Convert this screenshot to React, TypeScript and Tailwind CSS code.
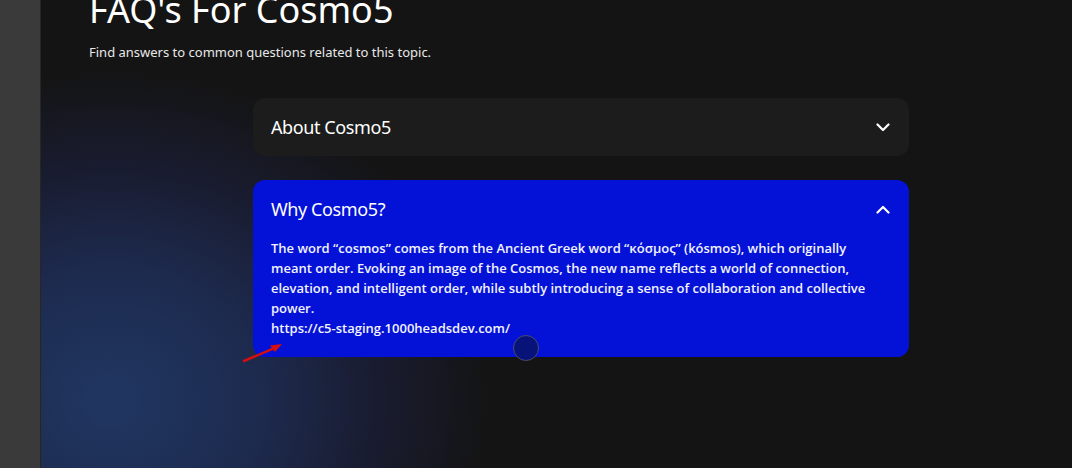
import React from "react";

function Chevron({ up }: { up?: boolean }) {
  return (
    <svg width="14" height="9" viewBox="0 0 14 9" fill="none" className="block">
      {up ? (
        <path d="M1.5 7.5L7 2L12.5 7.5" stroke="white" strokeWidth="2.2" strokeLinecap="round" strokeLinejoin="round" />
      ) : (
        <path d="M1.5 1.5L7 7L12.5 1.5" stroke="white" strokeWidth="2.2" strokeLinecap="round" strokeLinejoin="round" />
      )}
    </svg>
  );
}

export default function App() {
  return (
    <div className="relative flex h-[468px] w-[1072px] overflow-hidden bg-[#141414] font-['Noto_Sans',sans-serif] text-white">
      <div className="w-[40px] shrink-0 bg-[#3a3a3a]" />
      <div className="w-px shrink-0 bg-[#262626]" />
      <div className="relative flex-1 bg-[radial-gradient(ellipse_380px_330px_at_70px_400px,#203762_0%,#1d2a4e_40%,#191c30_70%,rgba(20,20,20,0)_100%)]">
        <div className="pl-[48px]">
          <h1 className="mt-[-12px] text-[36px] leading-[44px] font-normal">FAQ's For Cosmo5</h1>
          <p className="mt-[10px] text-[13px] leading-[20px] text-[#e8e8e8]">
            Find answers to common questions related to this topic.
          </p>
        </div>
        <div className="mt-[36px] ml-[212px] flex w-[656px] flex-col gap-[24px]">
          <div className="flex h-[58px] items-center justify-between rounded-[12px] bg-[#1c1c1c] px-[18px]">
            <span className="text-[18px] tracking-[-0.4px]">About Cosmo5</span>
            <span className="mr-[1px]"><Chevron /></span>
          </div>
          <div className="rounded-[12px] bg-[#0412d8] px-[18px] pb-[19px]">
            <div className="flex h-[58px] items-center justify-between">
              <span className="text-[18px] tracking-[-0.4px]">Why Cosmo5?</span>
              <span className="mr-[1px]"><Chevron up /></span>
            </div>
            <p className="pr-[15px] font-['Open_Sans',sans-serif] text-[13px] leading-[20px] font-semibold text-[#f2f3ff]">
              The word “cosmos” comes from the Ancient Greek word “κόσμος” (kósmos), which originally meant order. Evoking an image of the Cosmos, the new name reflects a world of connection, elevation, and intelligent order, while subtly introducing a sense of collaboration and collective power.
              <br />
              https://c5-staging.1000headsdev.com/
            </p>
          </div>
        </div>
      </div>
      <div className="absolute left-[513px] top-[335px] h-[26px] w-[26px] rounded-full border border-[#474c6e] bg-[#08137a]" />
      <svg className="absolute left-[240px] top-[338px]" width="48" height="28" viewBox="0 0 48 28">
        <path d="M4 23L37 9" stroke="#d40f0f" strokeWidth="2.5" strokeLinecap="round" />
        <path d="M42 6L30 7.5L35 14Z" fill="#d40f0f" />
      </svg>
    </div>
  );
}
